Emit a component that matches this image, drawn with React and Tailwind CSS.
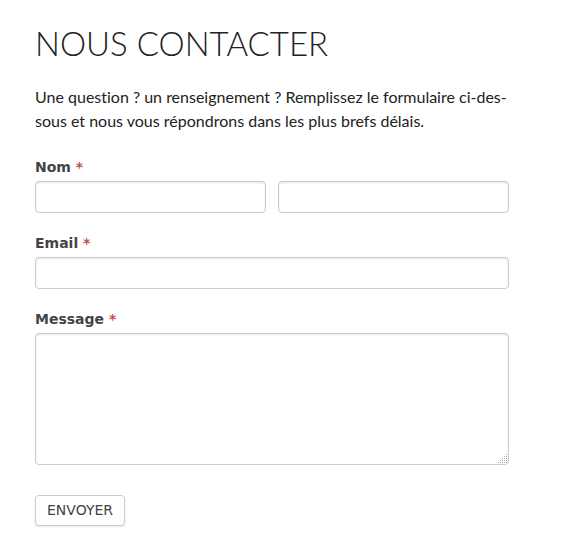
const box =
  "block w-full rounded border border-[#ccc] bg-white px-2 text-sm text-[#444] shadow-[inset_0_1px_2px_rgba(0,0,0,0.1)] outline-none focus:border-[#888]";

function Star() {
  return <span className="font-bold text-[#c94a4a]">*</span>;
}

const label = "mb-1 block text-sm font-bold text-[#444]";

const gripDots = [
  [8, 0],
  [6, 2], [8, 2],
  [4, 4], [6, 4], [8, 4],
  [2, 6], [4, 6], [6, 6], [8, 6],
  [0, 8], [2, 8], [4, 8], [6, 8], [8, 8],
];

function Grip() {
  return (
    <svg
      className="pointer-events-none absolute right-0.5 bottom-0.5"
      width="9"
      height="9"
      viewBox="0 0 9 9"
      shapeRendering="crispEdges"
      aria-hidden="true"
    >
      {gripDots.map(([x, y]) => (
        <rect key={`${x}-${y}`} x={x} y={y} width="1" height="1" fill="#aaa" />
      ))}
    </svg>
  );
}

export default function App() {
  return (
    <main className="min-h-screen bg-white pt-5 pr-[71px] pb-6 pl-[35px] font-['Lato',sans-serif] text-[#222]">
      <h1 className="text-[33px] leading-[46px] font-light uppercase">Nous contacter</h1>
      <p className="mt-[19px] text-base leading-6 [font-variant-ligatures:none]">
        Une question ? un renseignement ? Remplissez le formulaire ci-des&shy;sous et nous vous
        répondrons dans les plus brefs délais.
      </p>
      <form className="mt-6 font-['DejaVu_Sans',sans-serif]" onSubmit={(e) => e.preventDefault()}>
        <fieldset>
          <legend className={label}>
            Nom <Star />
          </legend>
          <div className="grid grid-cols-2 gap-3">
            <input type="text" aria-label="Prénom" className={`${box} h-8`} />
            <input type="text" aria-label="Nom" className={`${box} h-8`} />
          </div>
        </fieldset>
        <div className="mt-5">
          <label htmlFor="email" className={label}>
            Email <Star />
          </label>
          <input id="email" type="email" className={`${box} h-8`} />
        </div>
        <div className="mt-5">
          <label htmlFor="message" className={label}>
            Message <Star />
          </label>
          <div className="relative">
            <textarea id="message" className={`${box} h-[132px] resize-none`} />
            <Grip />
          </div>
        </div>
        <button
          type="submit"
          className="mt-[30px] rounded border border-[#ccc] bg-white px-[11px] pt-1 pb-[5px] text-sm text-[#444] uppercase shadow-[0_1px_2px_rgba(0,0,0,0.1)]"
        >
          Envoyer
        </button>
      </form>
    </main>
  );
}
